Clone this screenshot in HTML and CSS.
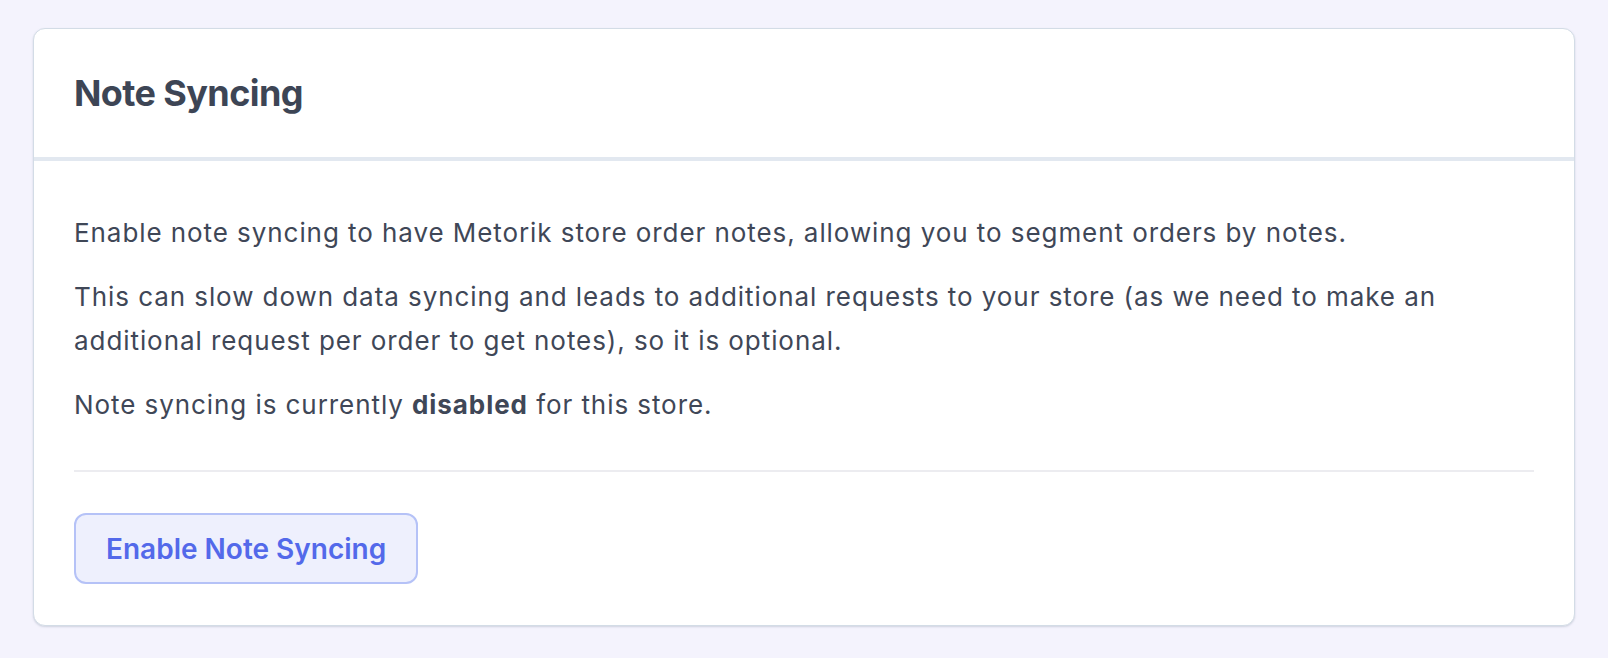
FILE: index.html
```html
<!DOCTYPE html>
<html lang="en">
<head>
<meta charset="utf-8">
<title>Note Syncing</title>
<link rel="stylesheet" href="styles.css">
</head>
<body>
  <section class="card">
    <header class="card-header">
      <h2 class="card-title">Note Syncing</h2>
    </header>
    <div class="card-body">
      <p class="text">Enable note syncing to have Metorik store order notes, allowing you to segment orders by notes.</p>
      <p class="text">This can slow down data syncing and leads to additional requests to your store (as we need to make an additional request per order to get notes), so it is optional.</p>
      <p class="text">Note syncing is currently <strong>disabled</strong> for this store.</p>
      <hr class="divider">
      <button class="btn" type="button">Enable Note Syncing</button>
    </div>
  </section>
</body>
</html>
```
FILE: styles.css
```css
html, body {
  margin: 0;
  padding: 0;
}
body {
  background: #f4f3fd;
  padding: 28px 33px;
  font-family: Inter, "Noto Sans", sans-serif;
  color: #3f4757;
}
.card {
  background: #ffffff;
  border: 1px solid #d3dce6;
  border-radius: 12px;
  box-shadow: 0 1px 2px rgba(100, 116, 139, 0.25);
  overflow: hidden;
}
.card-header {
  padding: 42px 40px;
  border-bottom: 4px solid #e2e8f0;
}
.card-title {
  margin: 0;
  font-size: 36px;
  line-height: 44px;
  font-weight: 700;
  color: #3d4555;
  letter-spacing: -0.6px;
}
.card-body {
  padding: 50px 40px 41px;
}
.text {
  margin: 0 0 20px;
  font-size: 26px;
  line-height: 44px;
  letter-spacing: 0.93px;
}
.text:last-of-type {
  margin-bottom: 0;
}
.text strong {
  font-weight: 700;
}
.divider {
  border: 0;
  border-top: 2px solid #ececf0;
  margin: 43px 0 41px;
  height: 0;
}
.btn {
  display: inline-block;
  font-family: Inter, "Noto Sans", sans-serif;
  font-size: 28px;
  font-weight: 600;
  line-height: 38px;
  color: #5369ea;
  background: #eef0fd;
  border: 2px solid #b5c2f7;
  border-radius: 12px;
  padding: 15px 30px 14px;
  cursor: pointer;
}
```
